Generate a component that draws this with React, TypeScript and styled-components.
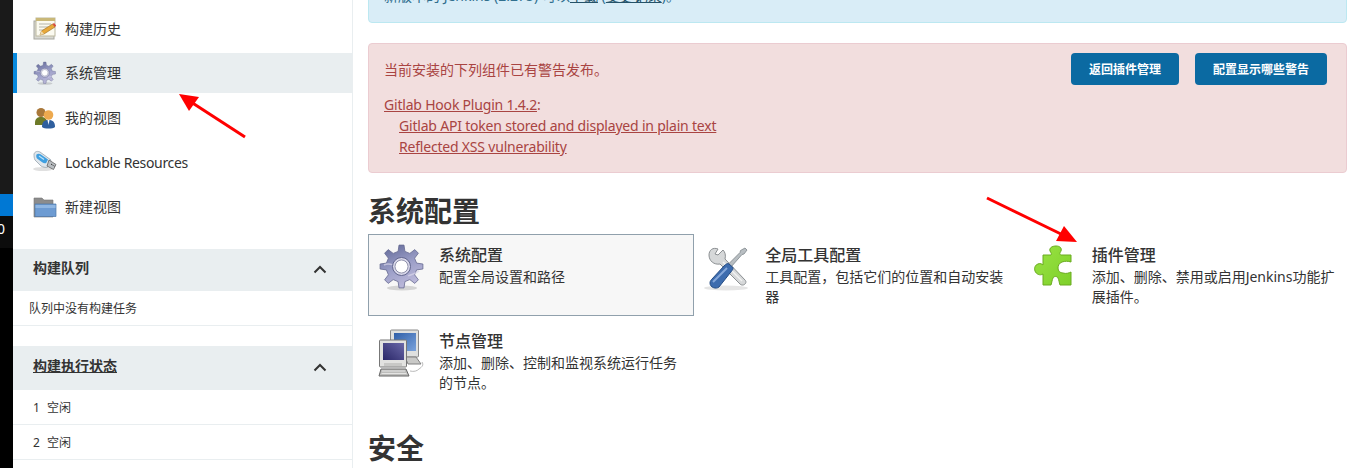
import React from 'react';
import styled, { createGlobalStyle } from 'styled-components';

const GlobalStyle = createGlobalStyle`
  html, body {
    margin: 0;
    padding: 0;
    height: 468px;
    overflow: hidden;
    background: #fff;
  }
  body {
    font-family: 'Noto Sans', 'Noto Sans CJK SC', sans-serif;
    color: #333;
  }
`;

const Page = styled.div`
  position: relative;
  display: flex;
  width: 1353px;
  height: 468px;
  overflow: hidden;
`;

const Strip = styled.div`
  display: flex;
  flex-direction: column;
  flex: 0 0 13px;
  background: #000;
`;

const StripDark = styled.div`
  height: 194px;
  background: #1a1a1a;
`;

const StripActive = styled.div`
  height: 22px;
  background: #0078d4;
`;

const StripCount = styled.div`
  height: 32px;
  background: #0c0c0c;
  color: #fff;
  font-size: 14px;
  line-height: 26px;
  margin-left: -3px;
  overflow: hidden;
`;

const Sidebar = styled.aside`
  flex: 0 0 339px;
  border-right: 1px solid #e9eef0;
  padding-top: 9px;
  box-sizing: content-box;
`;

const Tasks = styled.nav`
  display: flex;
  flex-direction: column;
  gap: 4.4px;
`;

const Task = styled.div<{ $active?: boolean }>`
  display: flex;
  align-items: center;
  gap: 8px;
  height: 40px;
  padding-left: ${p => (p.$active ? '16px' : '20px')};
  border-left: ${p => (p.$active ? '4px solid #0789de' : 'none')};
  background: ${p => (p.$active ? '#e9eef0' : 'transparent')};
  font-size: 14px;
  color: #333;
`;

const TaskLabel = styled.span<{ $latin?: boolean }>`
  margin-top: ${p => (p.$latin ? '0' : '-2px')};
  letter-spacing: ${p => (p.$latin ? '-0.33px' : '0')};
`;

const PanelHead = styled.div<{ $tall?: boolean; $gap: number }>`
  display: flex;
  align-items: center;
  justify-content: space-between;
  height: ${p => (p.$tall ? 44 : 42)}px;
  margin-top: ${p => p.$gap}px;
  padding: 0 25px 0 20px;
  background: #e9eef0;
`;

const PanelTitle = styled.span<{ $link?: boolean }>`
  margin-top: -5px;
  font-size: 14px;
  font-weight: 700;
  color: #333;
  text-decoration: ${p => (p.$link ? 'underline' : 'none')};
`;

const QueueRow = styled.div`
  height: 34px;
  line-height: 35px;
  padding-left: 16px;
  font-size: 12px;
  border-bottom: 1px solid #e9eef0;
`;

const ExecutorRow = styled(QueueRow)`
  display: flex;
  gap: 7px;
  padding-left: 20px;
`;

const Main = styled.main`
  flex: 1;
  padding: 0 6px 0 15px;
  min-width: 0;
`;

const InfoAlert = styled.div`
  height: 60px;
  margin-top: -37px;
  padding: 21px 15px 15px;
  box-sizing: border-box;
  background: #d9edf7;
  border: 1px solid #bce8f1;
  border-radius: 4px;
  color: #31708f;
  font-size: 14px;
  line-height: 21px;
  a {
    color: #245269;
    text-decoration: underline;
  }
`;

const DangerAlert = styled.div`
  display: flex;
  justify-content: space-between;
  height: 130px;
  margin-top: 20px;
  padding: 15px;
  box-sizing: border-box;
  background: #f2dede;
  border: 1px solid #ebccd1;
  border-radius: 4px;
  color: #a94442;
  font-size: 14px;
  line-height: 21px;
`;

const AlertText = styled.div`
  p {
    margin: 0 0 14px;
    line-height: 21px;
  }
  a {
    color: #a94442;
    text-decoration: underline;
    letter-spacing: -0.2px;
  }
`;

const Issue = styled.div`
  padding-left: 15px;
`;

const Actions = styled.div`
  display: flex;
  gap: 16px;
  margin: -6px 4px 0 0;
`;

const Button = styled.button`
  height: 32px;
  padding: 0 18px;
  border: 0;
  border-radius: 4px;
  background: #0b6aa2;
  color: #fff;
  font-family: inherit;
  font-size: 12px;
  font-weight: 700;
`;

const Heading = styled.h2<{ $gap: number }>`
  margin: ${p => p.$gap}px 0 6px;
  font-size: 28px;
  line-height: 34px;
  font-weight: 700;
  color: #333;
`;

const Tiles = styled.div`
  display: grid;
  grid-template-columns: repeat(3, 1fr);
  grid-auto-rows: 82px;
  gap: 4px 0;
`;

const Tile = styled.div<{ $selected?: boolean }>`
  display: flex;
  gap: 13px;
  padding: 8px 9px;
  box-sizing: border-box;
  border: 1px solid ${p => (p.$selected ? '#90a0ac' : 'transparent')};
  background: ${p => (p.$selected ? '#f7f7f7' : 'transparent')};
`;

const TileBody = styled.div`
  min-width: 0;
`;

const TileTitle = styled.div`
  font-size: 16px;
  line-height: 24px;
  font-weight: 500;
  color: #333;
`;

const TileText = styled.div`
  font-size: 14px;
  line-height: 20px;
  color: #333;
`;

const Overlay = styled.svg`
  position: absolute;
  inset: 0;
  pointer-events: none;
`;

// gear outline, shared by the small and big icon
const gearPath = (() => {
  const c = 23.5;
  const teeth = 8;
  const pts: string[] = [];
  for (let i = 0; i < teeth; i++) {
    const a = (i / teeth) * Math.PI * 2;
    const s = (Math.PI * 2) / teeth;
    [
      [15.5, -0.46],
      [21.5, -0.24],
      [21.5, 0.24],
      [15.5, 0.46],
    ].forEach(([r, o]) => {
      const t = a + o * s * 0.62;
      pts.push(`${(c + r * Math.sin(t)).toFixed(1)} ${(c - r * Math.cos(t)).toFixed(1)}`);
    });
  }
  return `M${pts.join('L')}Z`;
})();

const Gear = ({ size, id }: { size: number; id: string }) => (
  <svg width={size} height={size} viewBox="0 0 48 48">
    <defs>
      <linearGradient id={id} x1="0.25" y1="0" x2="0.7" y2="1">
        <stop offset="0" stopColor="#666d9c" />
        <stop offset="0.5" stopColor="#9c9fc8" />
        <stop offset="1" stopColor="#c0bcdc" />
      </linearGradient>
    </defs>
    <ellipse cx="24" cy="45" rx="15" ry="2.500" fill="#000" opacity="0.14" />
    <path d={gearPath} fill={`url(#${id})`} stroke="#666a90" strokeWidth="0.8" strokeLinejoin="round" />
    <path d="M6 22c6-3 8 2 12-2M30 33c3-2 8-2 11-5" fill="none" stroke="#d8d6ea" strokeWidth="1.500" opacity="0.7" />
    <circle cx="23.500" cy="23.500" r="9" fill="#d9d8ea" stroke="#62668e" />
    <circle cx="23.500" cy="23.500" r="6.500" fill="#fff" stroke="#7a7c99" strokeWidth="0.8" />
  </svg>
);

const NotepadIcon = () => (
  <svg width="24" height="24" viewBox="0 0 24 24">
    <rect x="1" y="4" width="20" height="18" fill="#d8d8d2" stroke="#a8a8a0" />
    <rect x="3" y="1" width="19" height="18" fill="#fbfaf0" stroke="#bdb9a0" />
    <rect x="3" y="1" width="19" height="3" fill="#c9b878" />
    <path d="M6 7h12M6 10h9M6 13h6" stroke="#b5b5aa" />
    <path d="M7 18l1.500-4 11-7 2.500 3-11 7z" fill="#e8a93a" stroke="#9a6a1e" strokeWidth="0.6" />
    <path d="M19.500 7l1.600-1 2 2.600-1.100 1.400z" fill="#d8483e" />
    <path d="M7 18l1.500-4 2.500 3z" fill="#f1dcae" />
  </svg>
);

const PeopleIcon = () => (
  <svg width="24" height="24" viewBox="0 0 24 24">
    <path d="M2 17c0-5 3-6 6-6s6 1 6 6v2H2z" fill="#6d7a28" />
    <circle cx="8" cy="6.500" r="4.500" fill="#a9783a" />
    <path d="M9 21c0-6 3-7 6.500-7s6.500 1 6.500 7c-2 2-11 2-13 0z" fill="#2f5f9e" />
    <path d="M14.500 14h2l-1 5z" fill="#fff" />
    <circle cx="15.500" cy="9" r="4.800" fill="#eda94e" />
  </svg>
);

const UsbIcon = () => (
  <svg width="24" height="24" viewBox="0 0 24 24">
    <ellipse cx="10" cy="19" rx="10" ry="2" fill="#000" opacity="0.12" />
    <path d="M1 4c1-3 4-3 6-2l11 8-3 7c-3 1-5 0-7-1L2 10c-1-2-1-4-1-6z" fill="#dfe6ec" stroke="#8b9aa5" strokeWidth="0.7" />
    <path d="M3.500 4.500c1-1 3-1 4-.3l7.500 5.300-1.800 3.500c-1.500.5-3 0-4-.7L4 8.500c-.8-1.200-1-2.800-.5-4z" fill="#3f9fe0" />
    <path d="M6 6l5 3.500" stroke="#bfe3f8" strokeWidth="1.200" />
    <path d="M16 10l7 4.500-2.500 5L14 16z" fill="#b9bec2" stroke="#555" strokeWidth="0.7" />
    <path d="M18 14l1.500 1M20.500 15.500l1 .7" stroke="#333" />
  </svg>
);

const FolderIcon = () => (
  <svg width="24" height="24" viewBox="0 0 24 24">
    <path d="M1 3h8l2 2h9v17H1z" fill="#8c8c8c" stroke="#777" strokeWidth="0.6" />
    <path d="M2 9h21v12.500H2z" fill="#6d9bd2" stroke="#4f78aa" strokeWidth="0.7" />
    <path d="M2.500 10h20v3H2.500z" fill="#8fb6e2" />
  </svg>
);

const ToolsIcon = () => (
  <svg width="48" height="48" viewBox="0 0 48 48">
    <ellipse cx="22" cy="45" rx="22" ry="2.500" fill="#000" opacity="0.1" />
    <path
      d="M14 6C9 4 5 7 5 12c0 6 5 10 11 9l20 20c3 3 8-1 5-4L21 16c1-4 0-7-2-9l-5 5-3-1z"
      fill="#d6d8d9"
      stroke="#8c9093"
    />
    <path d="M19 19l19 19" stroke="#f2f2f2" strokeWidth="1.500" />
    <path d="M41 5l2 2-3 4-2 .5L27 24l-3-2.500L36 9.500l.5-2z" fill="#b8bec2" stroke="#7f868b" strokeWidth="0.8" />
    <path d="M25 21l3.500 3c.8 1 .5 2.500-.5 3.500L15 44c-3 2.500-9 .5-9-4 0-2 1-3 2-4l12-13c2-2 3.500-3 5-2z" fill="#3d6cae" stroke="#264d84" />
    <path d="M23 25L9 39" stroke="#86a8da" strokeWidth="2" />
  </svg>
);

const PuzzleIcon = () => (
  <svg width="48" height="48" viewBox="0 0 48 48">
    <defs>
      <linearGradient id="puzzle-fill" x1="0" y1="0" x2="1" y2="1">
        <stop offset="0" stopColor="#9ae344" />
        <stop offset="1" stopColor="#7ed02a" />
      </linearGradient>
    </defs>
    <path
      d="M12 12h8c1-1 0-2-1-4-1-3 2-5 6-5s6 2 5 5c-1 2-2 3 0 4h10v7c-3-1-6-1-9 0-3 1-4 4-4 6 0 3 2 5 5 5 3 1 6 0 8-1v13H29c-1-3-1-5-2-7-1-2-4-2-5 0-1 2-1 4-2 7h-8V31c-3 2-7 0-8-3-1-3 0-6 3-7 2-1 4 0 5 1z"
      fill="url(#puzzle-fill)"
      stroke="#6aab20"
      strokeWidth="1"
      strokeLinejoin="round"
    />
  </svg>
);

const ComputerIcon = () => (
  <svg width="48" height="48" viewBox="0 0 48 48">
    <defs>
      <linearGradient id="screen-back" x1="0" y1="0" x2="1" y2="1">
        <stop offset="0" stopColor="#2f5fa8" />
        <stop offset="1" stopColor="#7ba3dc" />
      </linearGradient>
      <linearGradient id="screen-front" x1="0" y1="1" x2="1" y2="0">
        <stop offset="0" stopColor="#2a2768" />
        <stop offset="1" stopColor="#6a68a8" />
      </linearGradient>
    </defs>
    <rect x="12.500" y="1" width="28" height="27" rx="1" fill="#dfe0df" stroke="#8a8a8a" />
    <rect x="16" y="4" width="22" height="18" fill="url(#screen-back)" />
    <path d="M27 28h11l5 7H30z" fill="#c9c9c7" stroke="#808080" />
    <rect x="1.500" y="11" width="27" height="27" rx="1" fill="#e2e2e0" stroke="#777" />
    <rect x="5" y="14" width="21" height="17" fill="url(#screen-front)" />
    <rect x="6" y="34" width="18" height="3" fill="#c8c8c6" />
    <path d="M3 40h25l3 7H1z" fill="#bdbdbb" stroke="#666" />
    <path d="M4 42h23M3.500 44.500h25" stroke="#eee" strokeWidth="0.8" />
    <path d="M32 42c4 1 7 0 9-2 3-2 5-4 3-7" fill="none" stroke="#bbb" />
  </svg>
);

const Chevron = () => (
  <svg width="14" height="9" viewBox="0 0 14 9">
    <path d="M1.500 7.500L7 2l5.500 5.500" fill="none" stroke="#333" strokeWidth="2" />
  </svg>
);

const tasks = [
  { label: '构建历史', icon: <NotepadIcon /> },
  { label: '系统管理', icon: <Gear size={24} id="gear-small" />, active: true },
  { label: '我的视图', icon: <PeopleIcon /> },
  { label: 'Lockable Resources', icon: <UsbIcon />, latin: true },
  { label: '新建视图', icon: <FolderIcon /> },
];

const tiles = [
  { title: '系统配置', text: '配置全局设置和路径', icon: <Gear size={48} id="gear-big" />, selected: true },
  { title: '全局工具配置', text: '工具配置，包括它们的位置和自动安装器', icon: <ToolsIcon /> },
  { title: '插件管理', text: '添加、删除、禁用或启用Jenkins功能扩展插件。', icon: <PuzzleIcon /> },
  { title: '节点管理', text: '添加、删除、控制和监视系统运行任务的节点。', icon: <ComputerIcon /> },
];

const App = () => (
  <Page>
    <GlobalStyle />
    <Strip>
      <StripDark />
      <StripActive />
      <StripCount>0</StripCount>
    </Strip>
    <Sidebar>
      <Tasks>
        {tasks.map(task => (
          <Task key={task.label} $active={task.active}>
            {task.icon}
            <TaskLabel $latin={task.latin}>{task.label}</TaskLabel>
          </Task>
        ))}
      </Tasks>
      <PanelHead $gap={22.4}>
        <PanelTitle>构建队列</PanelTitle>
        <Chevron />
      </PanelHead>
      <QueueRow>队列中没有构建任务</QueueRow>
      <PanelHead $tall $gap={20}>
        <PanelTitle $link>构建执行状态</PanelTitle>
        <Chevron />
      </PanelHead>
      <ExecutorRow>
        <span>1</span>
        <span>空闲</span>
      </ExecutorRow>
      <ExecutorRow>
        <span>2</span>
        <span>空闲</span>
      </ExecutorRow>
    </Sidebar>
    <Main>
      <InfoAlert>
        新版本的 Jenkins (2.275) 可以<a>下载</a> (<a>变更记录</a>)。
      </InfoAlert>
      <DangerAlert>
        <AlertText>
          <p>当前安装的下列组件已有警告发布。</p>
          <div>
            <a>Gitlab Hook Plugin 1.4.2</a>:
          </div>
          <Issue>
            <a>Gitlab API token stored and displayed in plain text</a>
          </Issue>
          <Issue>
            <a>Reflected XSS vulnerability</a>
          </Issue>
        </AlertText>
        <Actions>
          <Button type="button">返回插件管理</Button>
          <Button type="button">配置显示哪些警告</Button>
        </Actions>
      </DangerAlert>
      <Heading $gap={21}>系统配置</Heading>
      <Tiles>
        {tiles.map(tile => (
          <Tile key={tile.title} $selected={tile.selected}>
            <div>{tile.icon}</div>
            <TileBody>
              <TileTitle>{tile.title}</TileTitle>
              <TileText>{tile.text}</TileText>
            </TileBody>
          </Tile>
        ))}
      </Tiles>
      <Heading $gap={29}>安全</Heading>
    </Main>
    <Overlay width="1353" height="468" viewBox="0 0 1353 468">
      <path d="M245 137L191 102" stroke="#f00" strokeWidth="3" />
      <path d="M179 94L199 97L189 111z" fill="#f00" />
      <path d="M987 198L1063 235" stroke="#f00" strokeWidth="3" />
      <path d="M1077 242L1056 241L1064 226z" fill="#f00" />
    </Overlay>
  </Page>
);

export default App;
